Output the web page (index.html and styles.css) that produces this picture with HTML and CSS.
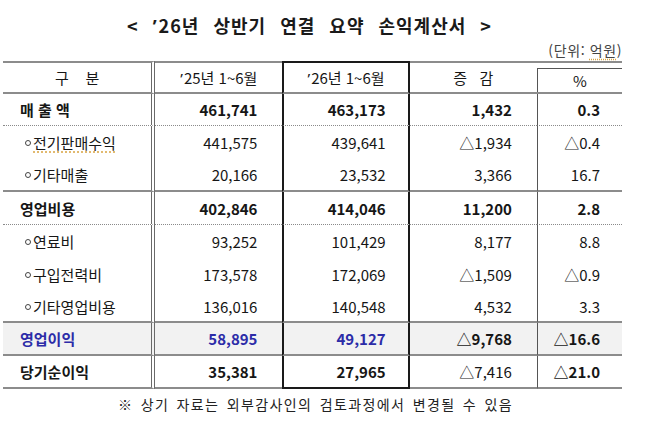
FILE: index.html
```html
<!DOCTYPE html>
<html lang="ko">
<head>
<meta charset="utf-8">
<title>'26년 상반기 연결 요약 손익계산서</title>
<link rel="stylesheet" href="styles.css">
</head>
<body>
<div class="page">
  <h1 class="title">&lt; <span class="q">’</span>26년 상반기 연결 요약 손익계산서 &gt;</h1>
  <div class="unit">(단위: <span class="spell">억원</span>)</div>
  <table class="pl">
    <colgroup>
      <col class="c-label">
      <col class="c-num">
      <col class="c-num">
      <col class="c-num">
      <col class="c-pct">
    </colgroup>
    <thead>
      <tr>
        <th class="label">구&nbsp;&nbsp;&nbsp;&nbsp;분</th>
        <th class="y25"><span class="q">’</span>25년 1~6월</th>
        <th class="y26"><span class="q">’</span>26년 1~6월</th>
        <th class="diff">증&nbsp;&nbsp;&nbsp;감</th>
        <th class="pct"><div class="pct-box">%</div></th>
      </tr>
    </thead>
    <tbody>
      <tr class="main dotted short">
        <td class="label">매 출 액</td>
        <td class="y25">461,741</td>
        <td class="y26">463,173</td>
        <td class="diff">1,432</td>
        <td class="pct">0.3</td>
      </tr>
      <tr class="sub">
        <td class="label"><span class="dot"></span><span class="spell">전기판매수익</span></td>
        <td class="y25">441,575</td>
        <td class="y26">439,641</td>
        <td class="diff">△1,934</td>
        <td class="pct">△0.4</td>
      </tr>
      <tr class="sub solid">
        <td class="label"><span class="dot"></span>기타매출</td>
        <td class="y25">20,166</td>
        <td class="y26">23,532</td>
        <td class="diff">3,366</td>
        <td class="pct">16.7</td>
      </tr>
      <tr class="main dotted">
        <td class="label">영업비용</td>
        <td class="y25">402,846</td>
        <td class="y26">414,046</td>
        <td class="diff">11,200</td>
        <td class="pct">2.8</td>
      </tr>
      <tr class="sub">
        <td class="label"><span class="dot"></span>연료비</td>
        <td class="y25">93,252</td>
        <td class="y26">101,429</td>
        <td class="diff">8,177</td>
        <td class="pct">8.8</td>
      </tr>
      <tr class="sub">
        <td class="label"><span class="dot"></span>구입전력비</td>
        <td class="y25">173,578</td>
        <td class="y26">172,069</td>
        <td class="diff">△1,509</td>
        <td class="pct">△0.9</td>
      </tr>
      <tr class="sub solid short">
        <td class="label"><span class="dot"></span>기타영업비용</td>
        <td class="y25">136,016</td>
        <td class="y26">140,548</td>
        <td class="diff">4,532</td>
        <td class="pct">3.3</td>
      </tr>
      <tr class="main solid highlight">
        <td class="label blue">영업이익</td>
        <td class="y25 blue">58,895</td>
        <td class="y26 blue">49,127</td>
        <td class="diff">△9,768</td>
        <td class="pct">△16.6</td>
      </tr>
      <tr class="main last">
        <td class="label">당기순이익</td>
        <td class="y25">35,381</td>
        <td class="y26">27,965</td>
        <td class="diff light">△7,416</td>
        <td class="pct">△21.0</td>
      </tr>
    </tbody>
  </table>
  <p class="note">※ 상기 자료는 외부감사인의 검토과정에서 변경될 수 있음</p>
</div>
</body>
</html>
```
FILE: styles.css
```css
html, body {
  margin: 0;
  padding: 0;
  background: #ffffff;
}

body {
  font-family: "Noto Sans CJK KR", "Noto Sans", "Liberation Sans", sans-serif;
  color: #161616;
}

.page {
  width: 648px;
  padding: 0 0 0 3px;
  box-sizing: border-box;
}

.q {
  font-family: "Noto Sans", "Liberation Sans", sans-serif;
  font-weight: 400;
  margin-right: 1px;
}

.title {
  margin: 0;
  width: 613px;
  padding-top: 12px;
  height: 27px;
  font-size: 18px;
  line-height: 27px;
  font-weight: 700;
  text-align: center;
  word-spacing: 8px;
  letter-spacing: 1px;
  color: #1a1a1a;
}

.title .q {
  font-weight: 700;
}

.unit {
  width: 619px;
  text-align: right;
  font-size: 14px;
  letter-spacing: 0.6px;
  line-height: 16px;
  height: 22px;
  padding-top: 3px;
  box-sizing: border-box;
  color: #444;
}

.spell {
  text-decoration: underline dotted #d9a441;
  text-underline-offset: 3px;
}

.pl {
  width: 619px;
  border-collapse: separate;
  border-spacing: 0;
  table-layout: fixed;
  font-size: 15px;
}

.c-label { width: 152px; }
.c-num { width: 127px; }
.c-pct { width: 85px; }

.pl th, .pl td {
  padding: 0;
  white-space: nowrap;
  box-sizing: border-box;
}

.pl thead th {
  height: 32px;
  font-weight: 400;
  text-align: center;
  border-top: 2px solid #8c8c8c;
  border-bottom: 2px solid #8c8c8c;
  vertical-align: middle;
}

.pl thead th.y26 {
  border-top-color: #1a1a1a;
}

.pl thead th.pct {
  padding-top: 5px;
  vertical-align: top;
}

.pct-box {
  border-top: 1px solid #555;
  border-left: 1px solid #555;
  height: 23px;
  line-height: 23px;
}

.pl tbody td {
  height: 33px;
  text-align: right;
  vertical-align: middle;
}

.pl tbody .short td {
  height: 32px;
}

.pl .label {
  border-right: 4px double #6a6a6a;
  text-align: left;
}

.pl thead .label {
  text-align: center;
}

.pl .y26 {
  border-left: 2px solid #1a1a1a;
  border-right: 2px solid #1a1a1a;
}

.pl tbody .pct {
  border-left: 1px solid #555;
}

.pl tbody .y25 { padding-right: 25px; }
.pl tbody .y26 { padding-right: 22px; }
.pl tbody .diff { padding-right: 25px; }
.pl tbody .pct { padding-right: 22px; }

.main td {
  font-weight: 700;
}

.main .label {
  padding-left: 17px;
}

.sub .label {
  padding-left: 22px;
}

.dot {
  display: inline-block;
  width: 4px;
  height: 4px;
  border: 1px solid #444;
  border-radius: 50%;
  margin-right: 2px;
  vertical-align: 3px;
}

.dotted td {
  border-bottom: 1px dotted #8a8a8a;
}

.solid td {
  border-bottom: 2px solid #8c8c8c;
}

.last td {
  border-bottom: 2px solid #8c8c8c;
}

.last td.y26 {
  border-bottom-color: #1a1a1a;
}

.highlight td {
  background: #f2f2f2;
}

.blue {
  color: #2c2ca8;
}

.light {
  font-weight: 400 !important;
}

.sub td {
  font-weight: 400;
}

.note {
  margin: 0;
  width: 625px;
  padding-top: 6px;
  text-align: center;
  font-size: 14px;
  line-height: 18px;
  letter-spacing: 1.4px;
  word-spacing: 2px;
  color: #222;
}
```
